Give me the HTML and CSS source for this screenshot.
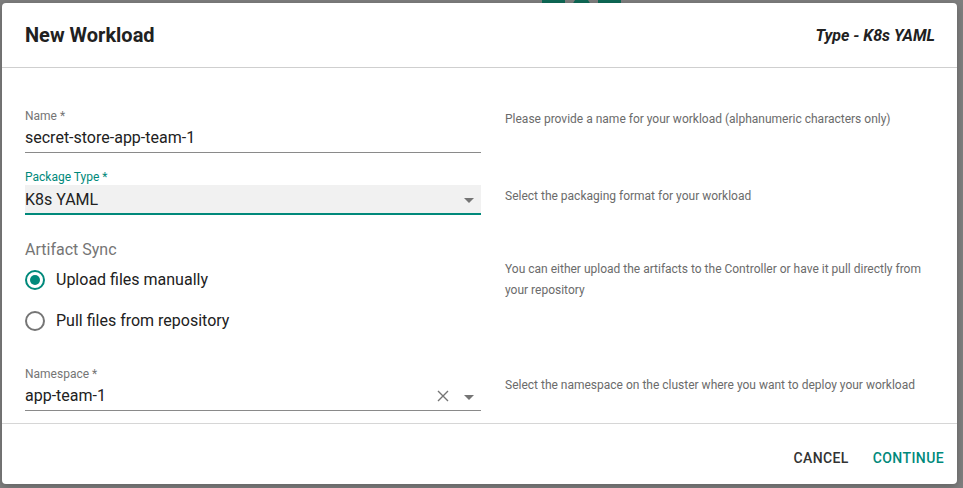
FILE: index.html
```html
<!DOCTYPE html>
<html lang="en">
<head>
    <meta charset="UTF-8">
    <meta name="viewport" content="width=device-width, initial-scale=1.0">
    <title>New Workload</title>
    <link rel="stylesheet" href="styles.css">
</head>
<body>
    <div class="page-behind">
        <span class="behind-btn"></span>
        <span class="behind-dot"></span>
        <span class="behind-btn"></span>
    </div>

    <div class="dialog">
        <div class="dialog-header">
            <h2>New Workload</h2>
            <span class="type-label">Type - K8s YAML</span>
        </div>

        <div class="dialog-body">
            <div class="row">
                <div class="field">
                    <label>Name *</label>
                    <div class="input">secret-store-app-team-1</div>
                </div>
                <p class="hint hint-name">Please provide a name for your workload (alphanumeric characters only)</p>
            </div>

            <div class="row row-package">
                <div class="field field-focused">
                    <label>Package Type *</label>
                    <div class="input input-filled">
                        <span class="value">K8s YAML</span>
                        <span class="caret"></span>
                    </div>
                </div>
                <p class="hint hint-package">Select the packaging format for your workload</p>
            </div>

            <div class="row row-sync">
                <div class="radio-group">
                    <div class="group-title">Artifact Sync</div>
                    <label class="radio checked"><span class="radio-circle"></span>Upload files manually</label>
                    <label class="radio"><span class="radio-circle"></span>Pull files from repository</label>
                </div>
                <p class="hint hint-sync">You can either upload the artifacts to the Controller or have it pull directly from your repository</p>
            </div>

            <div class="row row-namespace">
                <div class="field">
                    <label>Namespace *</label>
                    <div class="input">
                        <span class="value">app-team-1</span>
                        <svg class="clear-icon" width="12" height="12" viewBox="0 0 12 12">
                            <path d="M1 1 L11 11 M11 1 L1 11" stroke="#757575" stroke-width="1.4" fill="none"/>
                        </svg>
                        <span class="caret"></span>
                    </div>
                </div>
                <p class="hint hint-namespace">Select the namespace on the cluster where you want to deploy your workload</p>
            </div>
        </div>

        <div class="dialog-footer">
            <button class="text-button">Cancel</button>
            <button class="text-button primary">Continue</button>
        </div>
    </div>
</body>
</html>
```

FILE: styles.css
```css
* {
    box-sizing: border-box;
}

body {
    margin: 0;
    height: 100vh;
    padding: 3px 6px 4px 2px;
    display: flex;
    background-color: #7f7f7f;
    font-family: Roboto, 'Liberation Sans', Arial, sans-serif;
    color: #212121;
}

/* app behind the overlay, peeking out at the top */
.page-behind {
    position: absolute;
    top: 0;
    left: 542px;
    display: flex;
    gap: 8px;
}

.behind-btn {
    width: 23px;
    height: 6px;
    background-color: #0e6a57;
}

.behind-dot {
    width: 17px;
    height: 17px;
    margin-top: -3px;
    border-radius: 50%;
    background-color: #0e6a57;
}

.dialog {
    position: relative;
    flex: 1;
    display: flex;
    flex-direction: column;
    background-color: #fff;
    border-radius: 4px;
    box-shadow: 0 2px 8px rgba(0, 0, 0, 0.25);
}

.dialog-header {
    height: 65px;
    padding: 0 22px 0 23px;
    display: flex;
    align-items: center;
    justify-content: space-between;
    border-bottom: 1px solid #cfcfcf;
}

.dialog-header h2 {
    margin: 0;
    font-size: 20px;
    font-weight: 700;
    color: #212121;
}

.type-label {
    font-size: 16px;
    font-weight: 700;
    font-style: italic;
    color: #212121;
}

.dialog-body {
    flex: 1;
    padding: 41px 22px 0 23px;
    border-bottom: 1px solid #d6d6d6;
}

.row {
    display: flex;
    gap: 24px;
}

.field,
.radio-group {
    width: 456px;
    flex-shrink: 0;
}

.field label {
    display: block;
    font-size: 12px;
    line-height: 14px;
    color: #757575;
}

.input {
    height: 30px;
    display: flex;
    align-items: center;
    font-size: 16px;
    color: #212121;
    border-bottom: 1px solid #8a8a8a;
}

.input .value {
    flex: 1;
}

.row-package {
    margin-top: 16px;
}

.field-focused label {
    line-height: 16px;
    color: #00897b;
}

.input-filled {
    height: 30px;
    background-color: #f1f1f1;
    border-bottom: 2px solid #00897b;
}

.caret {
    width: 0;
    height: 0;
    margin: 3px 7px 0 8px;
    border-left: 5px solid transparent;
    border-right: 5px solid transparent;
    border-top: 5px solid #757575;
}

.clear-icon {
    margin: 1px 7px 0 0;
}

.row-sync {
    margin-top: 25px;
}

.group-title {
    padding-top: 1px;
    font-size: 16px;
    line-height: 18px;
    color: #757575;
}

.radio {
    height: 41px;
    display: flex;
    align-items: center;
    gap: 11px;
    font-size: 16px;
    color: #212121;
}

.radio-circle {
    width: 20px;
    height: 20px;
    border: 2px solid #757575;
    border-radius: 50%;
    display: flex;
    align-items: center;
    justify-content: center;
}

.radio.checked .radio-circle {
    border-color: #00897b;
}

.radio.checked .radio-circle::after {
    content: '';
    width: 10px;
    height: 10px;
    border-radius: 50%;
    background-color: #00897b;
}

.row-namespace {
    margin-top: 26px;
}

.hint {
    margin: 0;
    font-size: 12px;
    line-height: 21px;
    color: #6b6b6b;
}

.hint-package {
    padding-top: 17px;
}

.hint-sync {
    padding-top: 19px;
}

.hint-namespace {
    padding-top: 8px;
}

.dialog-footer {
    height: 60px;
    padding: 16px 5px 8px 0;
    display: flex;
    justify-content: flex-end;
    align-items: flex-start;
    gap: 8px;
}

.text-button {
    height: 36px;
    padding: 0 8px;
    border: none;
    background: none;
    font-family: Roboto, 'Liberation Sans', Arial, sans-serif;
    font-size: 14px;
    font-weight: 500;
    letter-spacing: 0.4px;
    text-transform: uppercase;
    color: #333;
    cursor: pointer;
}

.text-button.primary {
    color: #00897b;
}
```
